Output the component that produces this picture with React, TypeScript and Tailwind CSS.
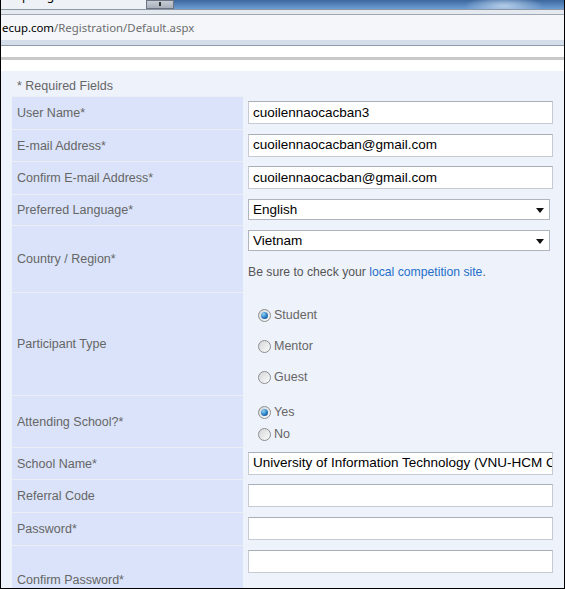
import React from "react";

const label = "text-[12.5px] text-[#666] font-['Liberation_Sans',Arial,sans-serif]";

function Radio({ checked, text }: { checked?: boolean; text: string }) {
  return (
    <div className="flex h-[16px] items-center">
      <span className="flex h-[13px] w-[13px] items-center justify-center rounded-full border border-[#8c8e90] bg-[linear-gradient(135deg,#d4d6d8,#fbfbfb)]">
        {checked && (
          <span className="h-[7px] w-[7px] rounded-full bg-[radial-gradient(circle_at_35%_30%,#8fd3f5,#2a7cc2_55%,#0d3f77)]" />
        )}
      </span>
      <span className={`ml-[3px] ${label} text-[#555]`}>{text}</span>
    </div>
  );
}

function TextBox({ value }: { value?: string }) {
  return (
    <div className="flex h-[23px] w-[305px] items-center overflow-hidden whitespace-nowrap border border-[#c6cbd3] border-t-[#a9afb9] bg-white pl-[4px] pt-[1px] text-[13.5px] text-black font-['Liberation_Sans',Arial,sans-serif]">
      {value}
    </div>
  );
}

function Select({ value }: { value: string }) {
  return (
    <div className="flex h-[21px] w-[302px] items-center justify-between border border-[#b0b5bd] bg-white pl-[4px] pr-[5px] pt-[1px] text-[13.5px] text-black font-['Liberation_Sans',Arial,sans-serif]">
      <span>{value}</span>
      <svg width="8" height="5" viewBox="0 0 8 5">
        <path d="M0 0h8L4 5z" fill="#111" />
      </svg>
    </div>
  );
}

function Row({
  text,
  h,
  top,
  children,
}: {
  text: string;
  h: string;
  top?: boolean;
  children: React.ReactNode;
}) {
  return (
    <div className={`flex ${h}`}>
      <div className={`flex w-[231px] items-center border-t border-[#eceef4] bg-[#dae3f9] pl-[5px] pt-[1px] ${label}`}>
        {text}
      </div>
      <div className={`flex flex-1 pl-[5px] ${top ? "items-start pt-[5px]" : "items-center"}`}>{children}</div>
    </div>
  );
}

export default function App() {
  return (
    <div className="h-[589px] w-[565px] overflow-hidden border-b border-l border-r border-black bg-white">
      {/* browser chrome */}
      <div className="flex h-[9px] overflow-hidden">
        <div className="w-[145px] overflow-hidden bg-[#eef1f5] pl-[1px]">
          <div className="-mt-[11px] whitespace-nowrap text-[12px] leading-[14px] text-black font-['Noto_Sans',sans-serif]">
            ecup Registration
          </div>
        </div>
        <div className="flex w-[28px] justify-center border border-[#6b7480] bg-[linear-gradient(to_bottom,#c7ccd4,#a9b0bb)]">
          <span className="mt-[1px] h-[4px] w-[2px] bg-[#333]" />
        </div>
        <div className="flex-1 bg-[radial-gradient(ellipse_40px_10px_at_330px_6px,#b5cde8,transparent),linear-gradient(to_bottom,#3b679c,#6d9ed4)]" />
      </div>
      <div className="h-[6px] border-t border-b border-t-[#8d96a3] border-b-[#a1a8b3] bg-[#e4e9f0]" />
      <div className="flex h-[25px] items-center bg-[#f4f6fa] pl-[1px] text-[11.4px] font-['Noto_Sans',sans-serif]">
        <span className="text-black">ecup.com</span>
        <span className="text-[#6d6d6d]">/Registration/Default.aspx</span>
      </div>
      <div className="h-[6px] border-b border-[#8f9aa8] bg-[#d4deeb]" />
      <div className="h-[11px] bg-white" />
      <div className="h-[3px] bg-[#c9c9c9]" />
      <div className="h-[11px] bg-white" />

      {/* page */}
      <div className="bg-[#eef2fb] px-[11px]">
        <div className={`flex h-[25px] items-center pl-[5px] pt-[6px] ${label} text-[#555]`}>* Required Fields</div>

        <Row text="User Name*" h="h-[33px]">
          <TextBox value="cuoilennaocacban3" />
        </Row>
        <Row text="E-mail Address*" h="h-[32px]">
          <TextBox value="cuoilennaocacban@gmail.com" />
        </Row>
        <Row text="Confirm E-mail Address*" h="h-[33px]">
          <TextBox value="cuoilennaocacban@gmail.com" />
        </Row>
        <Row text="Preferred Language*" h="h-[31px]">
          <Select value="English" />
        </Row>
        <Row text="Country / Region*" h="h-[67px]" top>
          <div className="flex flex-col">
            <Select value="Vietnam" />
            <div className={`mt-[12px] text-[12.2px] text-[#555] font-['Liberation_Sans',Arial,sans-serif]`}>
              Be sure to check your <span className="text-[#1f6fc9]">local competition site</span>.
            </div>
          </div>
        </Row>
        <Row text="Participant Type" h="h-[103px]">
          <div className="ml-[10px] flex flex-col gap-[15px] pt-[5px]">
            <Radio checked text="Student" />
            <Radio text="Mentor" />
            <Radio text="Guest" />
          </div>
        </Row>
        <Row text="Attending School?*" h="h-[52px]">
          <div className="ml-[10px] flex flex-col gap-[6px] pt-[4px]">
            <Radio checked text="Yes" />
            <Radio text="No" />
          </div>
        </Row>
        <Row text="School Name*" h="h-[32px]">
          <TextBox value="University of Information Technology (VNU-HCM City)" />
        </Row>
        <Row text="Referral Code" h="h-[33px]">
          <TextBox />
        </Row>
        <Row text="Password*" h="h-[33px]">
          <TextBox />
        </Row>
        <Row text="Confirm Password*" h="h-[68px]" top>
          <TextBox />
        </Row>
      </div>
    </div>
  );
}
